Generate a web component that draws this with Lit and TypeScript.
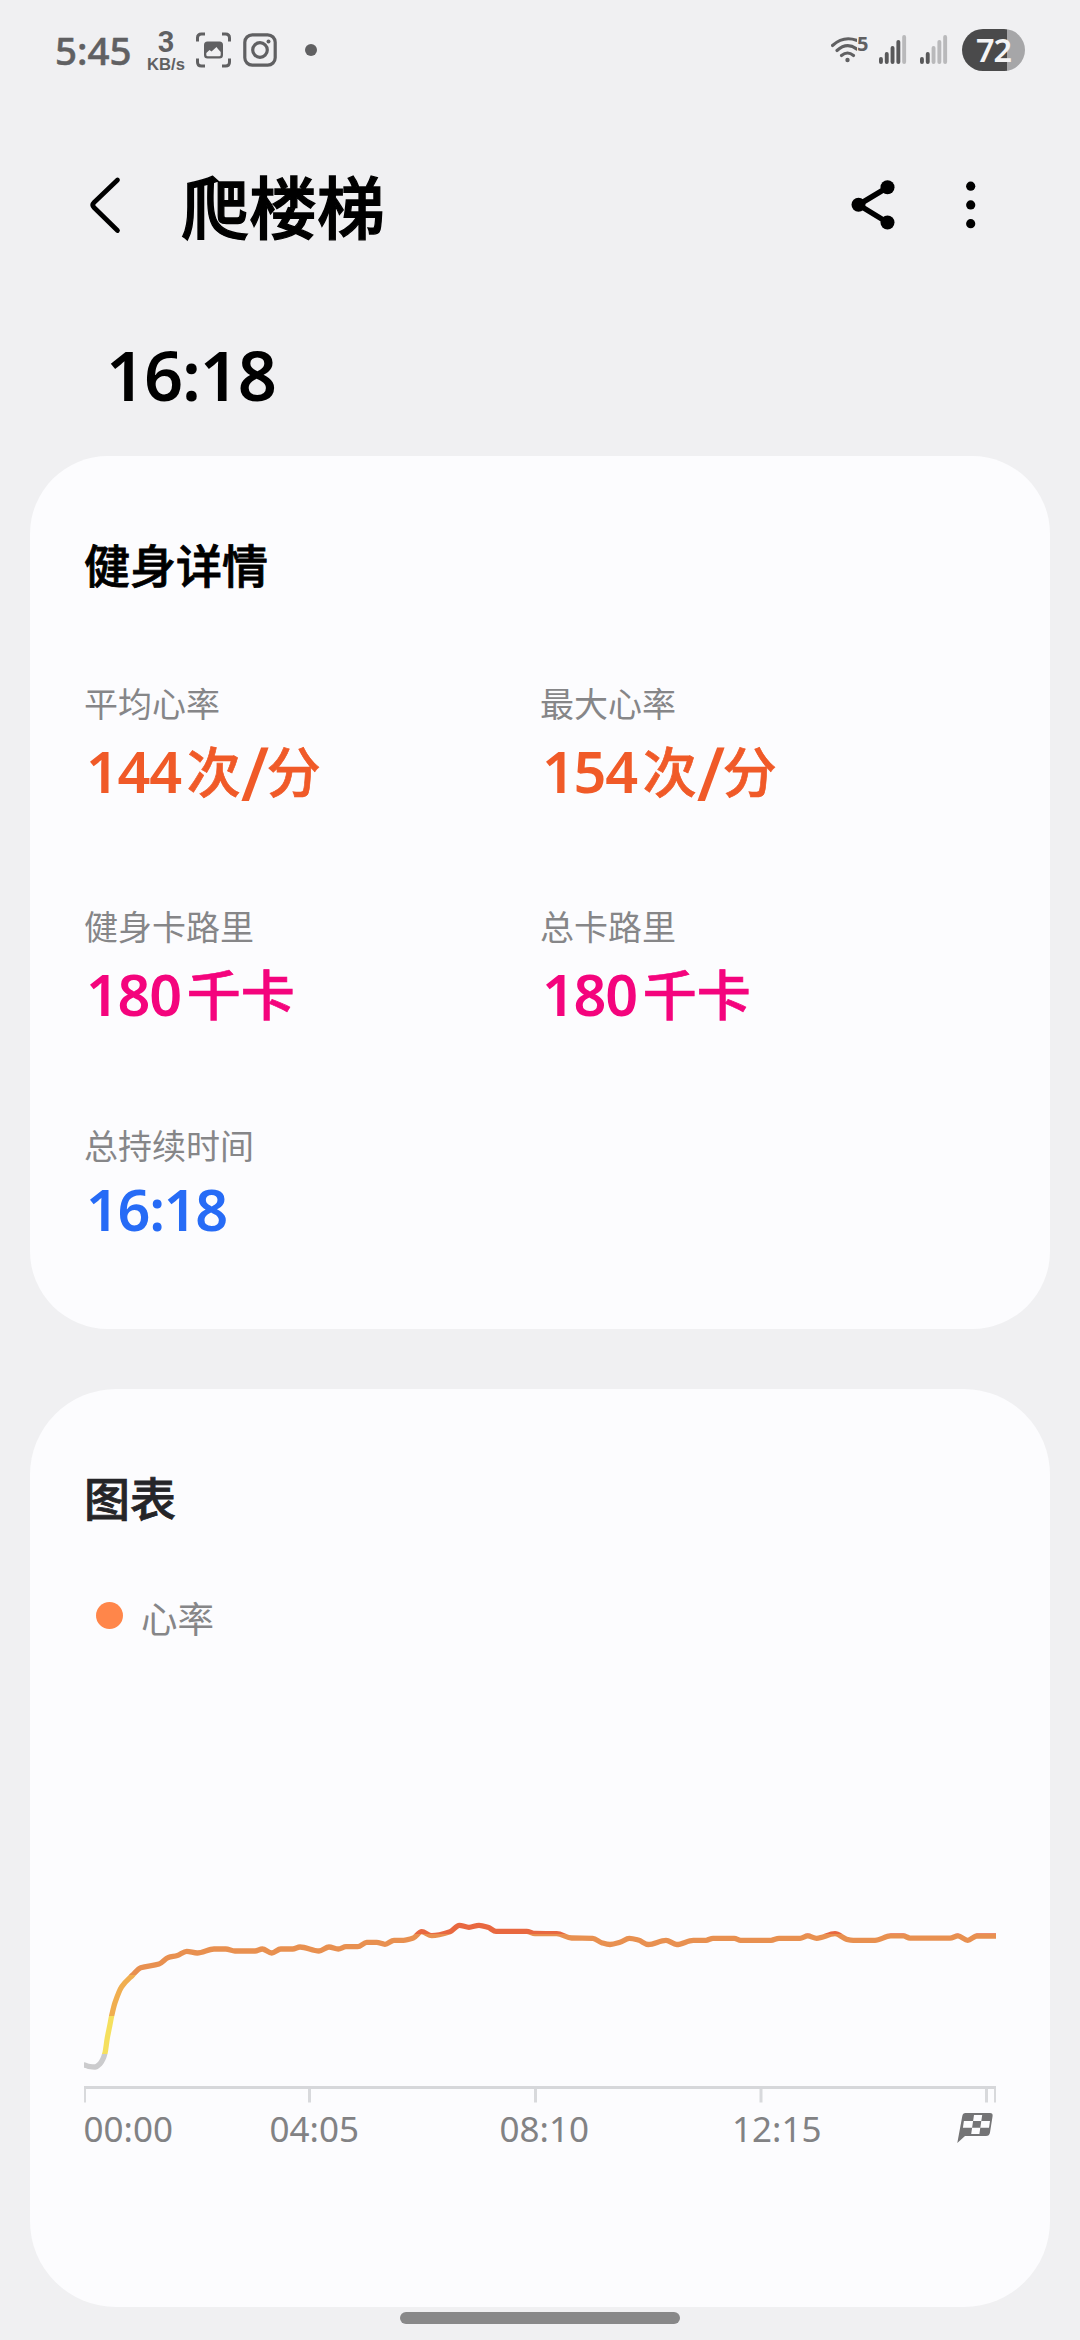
import { LitElement, html, svg, css } from "lit";
import { customElement, property } from "lit/decorators.js";

type Point = [number, number];

interface Metric {
  label: string;
  value: string;
  unit: string[];
  tone: string;
}

const METRICS: Metric[] = [
  { label: "平均心率", value: "144", unit: ["次", "/", "分"], tone: "rate" },
  { label: "最大心率", value: "154", unit: ["次", "/", "分"], tone: "rate" },
  { label: "健身卡路里", value: "180", unit: ["千卡"], tone: "energy" },
  { label: "总卡路里", value: "180", unit: ["千卡"], tone: "energy" },
  { label: "总持续时间", value: "16:18", unit: [], tone: "time" },
];

const HEART_RATE: Point[] = [
  [84, 2065], [88.3, 2066.3], [95, 2067], [100, 2063.7], [102.7, 2059.5], [105, 2053],
  [107.3, 2038], [109.7, 2026], [111.7, 2015.7], [115, 2002.7], [121.7, 1986.7], [132.7, 1975],
  [140.7, 1967.7], [159, 1964], [168.3, 1957.5], [177.3, 1955.5], [186.7, 1951.3], [197.3, 1953],
  [214, 1949], [225.7, 1949], [235, 1951], [255, 1951], [262.3, 1949], [271.7, 1953],
  [280.7, 1949], [292.7, 1949], [300, 1947], [319, 1951], [329, 1947], [338.3, 1949],
  [346, 1946.7], [357.7, 1946.7], [366.7, 1942.4], [376.7, 1942.4], [385, 1944.3], [394, 1940.3],
  [403.3, 1940.3], [413.3, 1938], [421.7, 1931.7], [431.7, 1935.7], [450, 1931.7], [459.3, 1925.3],
  [469, 1927.3], [479, 1925.3], [488, 1927.3], [496, 1931.4], [526.7, 1931.4], [535, 1933.5],
  [556.7, 1933.7], [571.7, 1938], [592.7, 1938.3], [601.7, 1942.7], [610, 1944.5], [620, 1942.3],
  [629.3, 1938.3], [638.3, 1940], [648.3, 1944.5], [666, 1940.3], [676.7, 1944.5], [693.3, 1940.3],
  [706, 1940.3], [713, 1938.3], [734.3, 1938.3], [740.7, 1940.3], [771, 1940.3], [779, 1938.3],
  [800, 1938.3], [807.7, 1935.9], [816.7, 1938.3], [835, 1933.7], [846.7, 1939.3], [853.3, 1940.3],
  [875, 1940.3], [890.7, 1935.9], [903.3, 1935.9], [910, 1938.1], [950, 1938.1], [958, 1935.9],
  [967.7, 1940.3], [976.7, 1936], [996, 1936],
];

const TICKS: { x: number; w: number }[] = [
  { x: 84, w: 2 }, { x: 308, w: 3 }, { x: 534, w: 3 }, { x: 759.5, w: 3 }, { x: 985, w: 3 }, { x: 994, w: 2 },
];

const TICK_LABELS: { x: number; text: string }[] = [
  { x: 83.5, text: "00:00" }, { x: 269.5, text: "04:05" }, { x: 499.5, text: "08:10" }, { x: 732, text: "12:15" },
];

/** Rounded line through all points; tangents flatten at peaks and plateaus. */
function smoothPath(points: Point[]): string {
  const slope = (i: number): number => {
    if (i === 0 || i === points.length - 1) return 0;
    const [x0, y0] = points[i - 1];
    const [x1, y1] = points[i];
    const [x2, y2] = points[i + 1];
    const a = (y1 - y0) / (x1 - x0);
    const b = (y2 - y1) / (x2 - x1);
    return a * b <= 0 ? 0 : (2 * a * b) / (a + b);
  };
  let d = `M${points[0][0]} ${points[0][1]}`;
  for (let i = 1; i < points.length; i++) {
    const [x0, y0] = points[i - 1];
    const [x1, y1] = points[i];
    const h = (x1 - x0) / 3;
    d += `C${x0 + h} ${y0 + slope(i - 1) * h} ${x1 - h} ${y1 - slope(i) * h} ${x1} ${y1}`;
  }
  return d;
}

@customElement("status-bar")
export class StatusBar extends LitElement {
  static styles = css`
    :host { display: block; color: #606062; }
    .bar { display: flex; align-items: center; height: 100px; padding: 0 55px; }
    .clock { font: 500 38.5px/54px "Noto Sans", sans-serif; width: 91px; -webkit-text-stroke: 0.5px currentColor; }
    .speed { display: flex; flex-direction: column; align-items: center; width: 40px; }
    .rate { font: 700 29px/29px Roboto, sans-serif; }
    .unit { font: 700 16.6px/16px "Liberation Sans", sans-serif; }
    .icon { display: block; flex: none; }
    .capture { margin-left: 9px; }
    .camera { margin-left: 11px; }
    .dot { width: 12px; height: 12px; border-radius: 50%; background: #606062; margin-left: 28px; }
    .right { display: flex; align-items: center; margin-left: auto; }
    .wifi { display: flex; }
    .gen { font: 700 20px/20px "Noto Sans", sans-serif; width: 22px; margin-top: -2px; }
    .second { margin-left: 13px; }
    .battery { display: flex; justify-content: center; align-items: center; width: 63px; height: 42px; margin-left: 14px; border-radius: 21px; background: linear-gradient(90deg, #4a4a4b 45px, #a6a6a8 45px); color: #f4f4f5; font: 600 32.5px/42px "Noto Sans", sans-serif; letter-spacing: -1px; }
  `;

  private signal(level: number, cls: string) {
    const tops = [57, 52, 46, 40, 35];
    return html`<svg class="icon ${cls}" width="28" height="30" viewBox="0 35 28 30">
      ${tops.map((t, i) => svg`<rect x=${i * 5.8} y=${t} width="3.9" height=${64 - t} rx="1.9" fill=${i < level ? "#58585a" : "#b9b9bb"}></rect>`)}
    </svg>`;
  }

  render() {
    return html`<div class="bar">
      <span class="clock">5:45</span>
      <div class="speed"><span class="rate">3</span><span class="unit">KB/s</span></div>
      <svg class="icon capture" width="37" height="36" viewBox="195 32.5 37 36">
        <path d="M197.5 42V38.5Q197.5 34.5 201.500 34.500H205M222 34.500H225.500Q229.500 34.500 229.500 38.500V42M229.500 59V62.500Q229.500 66.500 225.500 66.500H222M205 66.500H201.500Q197.500 66.500 197.500 62.500V59" fill="none" stroke="#606062" stroke-width="3"></path>
        <path fill-rule="evenodd" fill="#606062" d="M207.500 42H219.500Q223 42 223 45.500V55.500Q223 59 219.500 59H207.500Q204 59 204 55.500V45.500Q204 42 207.500 42ZM206.300 53.500L209.500 50.500L211.500 52L216.500 47.500L218 49.500L220.700 52.500V55.200Q220.700 56.700 219.200 56.700H207.800Q206.300 56.700 206.300 55.200Z"></path>
      </svg>
      <svg class="icon camera" width="34" height="34" viewBox="243.500 33.500 34 34">
        <rect x="245.300" y="35.300" width="30.400" height="30.400" rx="7.500" fill="none" stroke="#606062" stroke-width="3.200"></rect>
        <circle cx="260.500" cy="50.500" r="7.300" fill="none" stroke="#606062" stroke-width="3.200"></circle>
        <circle cx="269" cy="42" r="2" fill="#606062"></circle>
      </svg>
      <span class="dot"></span>
      <div class="right">
        <div class="wifi">
          <svg class="icon" width="26" height="28" viewBox="830.500 35 26 28">
            <path d="M832 44.500Q843 34.500 856 39.300M836.500 49.500Q846.500 40.500 856.500 48.200M841 54.500Q847 49.500 853 54.500" fill="none" stroke="#606062" stroke-width="3.100" stroke-linecap="round"></path>
            <circle cx="847" cy="59" r="2.200" fill="#606062"></circle>
          </svg>
          <span class="gen">5</span>
        </div>
        ${this.signal(4, "first")} ${this.signal(2, "second")}
        <span class="battery">72</span>
      </div>
    </div>`;
  }
}

@customElement("workout-metric")
export class WorkoutMetric extends LitElement {
  @property({ attribute: false }) metric!: Metric;

  static styles = css`
    :host { display: block; }
    .label { color: #868688; font: 400 34px/50px "Noto Sans CJK SC", sans-serif; }
    .value { display: flex; align-items: baseline; height: 84px; padding-left: 2px; }
    .rate { color: #f05a28; }
    .energy { color: #f4047d; }
    .time { color: #266bf6; height: 78px; }
    .number { font: 600 57.5px/84px "Noto Sans", sans-serif; letter-spacing: -1.3px; }
    .time .number { line-height: 78px; }
    .unit { margin-left: 6px; font: 500 54px/84px "Noto Sans CJK SC", sans-serif; -webkit-text-stroke: 0.7px currentColor; white-space: nowrap; }
    .slash { font: 500 74px/0 "Noto Sans", sans-serif; letter-spacing: -2.5px; vertical-align: -8px; -webkit-text-stroke: 0; }
  `;

  render() {
    const m = this.metric;
    return html`<div class="label">${m.label}</div>
      <div class="value ${m.tone}"><span class="number">${m.value}</span>${m.unit.length
        ? html`<span class="unit">${m.unit.map((part) => html`<span class=${part === "/" ? "slash" : ""}>${part}</span>`)}</span>`
        : null}</div>`;
  }
}

@customElement("heart-chart")
export class HeartChart extends LitElement {
  static styles = css`
    :host { display: block; }
    .plot { display: block; overflow: visible; }
    .tick-label { font: 400 35px "Noto Sans", sans-serif; fill: #828284; }
  `;

  render() {
    return html`<svg class="plot" width="912" height="260" viewBox="84 1900 912 260">
      <defs>
        <linearGradient id="zones" gradientUnits="userSpaceOnUse" x1="0" y1="1900" x2="0" y2="2100">
          <stop offset="0.168" stop-color="#e86840"></stop>
          <stop offset="0.172" stop-color="#e89050"></stop>
          <stop offset="0.376" stop-color="#e89050"></stop>
          <stop offset="0.376" stop-color="#f0ae50"></stop>
          <stop offset="0.5785" stop-color="#f0ae50"></stop>
          <stop offset="0.5785" stop-color="#f5e05e"></stop>
          <stop offset="0.7685" stop-color="#f5e05e"></stop>
          <stop offset="0.7685" stop-color="#cbcbcd"></stop>
        </linearGradient>
      </defs>
      <path d=${smoothPath(HEART_RATE)} fill="none" stroke="url(#zones)" stroke-width="5.300" stroke-linejoin="round"></path>
      <rect x="84" y="2086" width="912" height="3" fill="#d6d7da"></rect>
      ${TICKS.map((t) => svg`<rect x=${t.x} y="2089" width=${t.w} height="13.500" fill="#d8d9dc"></rect>`)}
      ${TICK_LABELS.map((t) => svg`<text class="tick-label" x=${t.x} y="2142">${t.text}</text>`)}
      <path fill="#747476" d="M965.500 2113H990Q993 2113 992.600 2116L990 2132.500Q989.400 2136 986 2136H965L957.300 2143L962.300 2116Q962.800 2113 965.500 2113Z"></path>
      <path fill="#fcfcfe" d="M974 2115H982.200L981.300 2121H973.100ZM963.900 2121H973.100L972.100 2127.700H962.900ZM981.300 2121H990L989 2127.700H980.300ZM972.100 2127.700H980.300L979.400 2134H971.200Z"></path>
    </svg>`;
  }
}

@customElement("app-root")
export class AppRoot extends LitElement {
  static styles = css`
    :host { display: block; height: 2340px; overflow: hidden; background: #f0f0f2; }
    .screen { display: flex; flex-direction: column; height: 2340px; }
    .header { display: flex; align-items: center; height: 100px; margin-top: 55px; padding: 0 88px; }
    .icon { display: block; flex: none; }
    .title { margin: 0 auto 0 59px; font: 500 68px/100px "Noto Sans CJK SC", sans-serif; -webkit-text-stroke: 1.3px currentColor; color: #000; }
    .more { margin-left: 68px; }
    .elapsed { height: 100px; margin-top: 70px; padding-left: 106px; font: 600 68.5px/100px "Noto Sans", sans-serif; letter-spacing: -1.2px; color: #000; }
    .card { box-sizing: border-box; margin: 0 30px; padding: 0 54px; background: #fcfcfe; }
    .details { margin-top: 31px; height: 873px; border-radius: 78px; padding-top: 72px; }
    .charts { margin-top: 60px; height: 918px; border-radius: 86px; padding-top: 72px; }
    .heading { margin: 0; font: 500 46px/70px "Noto Sans CJK SC", sans-serif; -webkit-text-stroke: 0.8px currentColor; color: #000; }
    .soft { color: #252528; }
    .grid { display: grid; grid-template-columns: 456px 456px; grid-template-rows: 134px 134px 130px; row-gap: 89px; margin-top: 80px; }
    .wide { margin-top: -4px; }
    .legend { display: flex; align-items: center; height: 60px; margin-top: 56px; padding-left: 12px; }
    .swatch { width: 27px; height: 27px; margin-top: -3px; border-radius: 50%; background: #ff864a; }
    .series { margin: 1px 0 0 18px; font: 400 36.5px/60px "Noto Sans CJK SC", sans-serif; color: #868688; }
    .chart { margin-top: 253px; }
    .home { width: 280px; height: 12px; margin: 5px auto 0; border-radius: 6px; background: #888889; }
  `;

  render() {
    return html`<div class="screen">
      <status-bar></status-bar>
      <header class="header">
        <svg class="icon" width="34" height="60" viewBox="88 175 34 60">
          <path d="M117.500 180L94 202.500Q91.500 205 94 207.500L117.500 230.500" fill="none" stroke="#000" stroke-width="4.700" stroke-linecap="round"></path>
        </svg>
        <h1 class="title">爬楼梯</h1>
        <svg class="icon" width="46" height="52" viewBox="850 179 46 52">
          <path d="M887.500 187.300L858.500 204.800L887.500 222.500" fill="none" stroke="#000" stroke-width="5.500"></path>
          <circle cx="858.500" cy="204.800" r="7"></circle>
          <circle cx="887.500" cy="187.300" r="7"></circle>
          <circle cx="887.500" cy="222.500" r="7"></circle>
        </svg>
        <svg class="icon more" width="28" height="52" viewBox="964 179 28 52">
          <circle cx="970.700" cy="186.200" r="4.600"></circle>
          <circle cx="970.700" cy="204.900" r="4.600"></circle>
          <circle cx="970.700" cy="223.700" r="4.600"></circle>
        </svg>
      </header>
      <div class="elapsed">16:18</div>
      <section class="card details">
        <h2 class="heading">健身详情</h2>
        <div class="grid">
          ${METRICS.map((m, i) => html`<workout-metric class=${i === 4 ? "wide" : ""} .metric=${m}></workout-metric>`)}
        </div>
      </section>
      <section class="card charts">
        <h2 class="heading soft">图表</h2>
        <div class="legend"><span class="swatch"></span><span class="series">心率</span></div>
        <heart-chart class="chart"></heart-chart>
      </section>
      <div class="home"></div>
    </div>`;
  }
}
